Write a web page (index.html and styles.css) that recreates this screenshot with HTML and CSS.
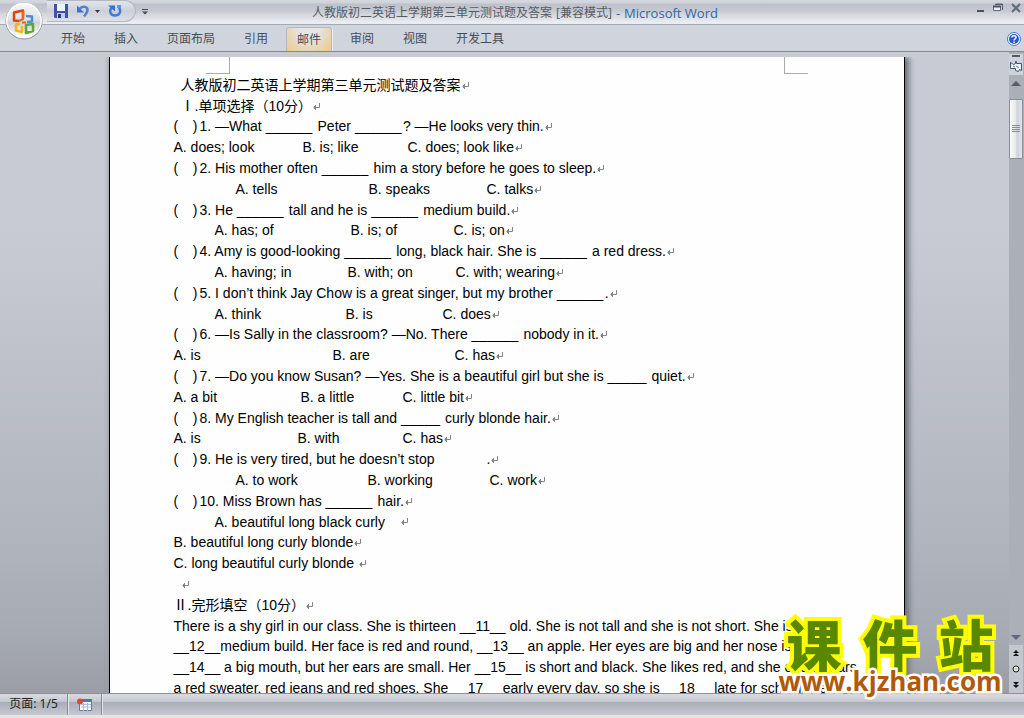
FILE: index.html
```html
<!DOCTYPE html>
<html lang="zh-CN">
<head>
<meta charset="utf-8">
<title>人教版初二英语上学期第三单元测试题及答案 - Microsoft Word</title>
<link rel="stylesheet" href="styles.css">
</head>
<body>
<svg class="defs" aria-hidden="true"><symbol id="ret" viewBox="0 0 8 8"><path d="M7.500 0v4.500H1.500M3.500 2v5M2.500 3v3" fill="none" stroke="#858585"/></symbol></svg>
<div class="app">
  <header class="chrome">
    <button class="office" aria-label="Office">
      <svg viewBox="0 0 40 40"><defs><linearGradient id="orb" x2="0" y2="1"><stop offset="0" stop-color="#f4f5f7"/><stop offset=".45" stop-color="#dfe1e5"/><stop offset=".55" stop-color="#cfd2d7"/><stop offset="1" stop-color="#fff"/></linearGradient></defs><circle cx="20" cy="20" r="18.500" fill="#858a93"/><circle cx="20" cy="19.500" r="18" fill="#fff"/><circle cx="20" cy="20" r="16.500" fill="url(#orb)"/><g fill="none" stroke-width="2.500" stroke-linejoin="round"><path d="M15 20l-5-.5v-8l9-2v6" stroke="#d54710"/><path d="M19 10v8l-4 2" stroke="#e8681c"/><path d="M22 15l6 .5v5l-5 .5" stroke="#4b90cf"/><path d="M16 23l-4 .5v6l6 1.500v-6" stroke="#f3b51c"/><path d="M22 24l7-1v7l-7 2z" stroke="#62a52c"/></g><path d="M18 21.500h4" stroke="#d8641e" stroke-width="2"/></svg>
    </button>
    <div class="titlebar">
      <div class="quick">
        <button aria-label="保存"><svg width="14" height="14" viewBox="0 0 14 14"><path d="M0 0h14v14H1L0 13z" fill="#3f52a6"/><path d="M3 0h8v7H3z" fill="#eef2fb"/><path d="M3 9h8v5H3z" fill="#c3cfe8"/><path d="M4 10h3v4H4z" fill="#26377e"/></svg></button>
        <button aria-label="撤消"><svg width="14" height="14" viewBox="0 0 14 14"><path d="M4 4.500c3-3 8-2 7.500 2-.3 2.500-2 4-3.500 6" fill="none" stroke="#4f83d0" stroke-width="2.500"/><path d="M1 1.500v7h7z" fill="#4272c4"/></svg></button>
        <svg class="drop" width="5" height="3"><path d="M0 0h5L2.500 3z" fill="#333a44"/></svg>
        <button aria-label="恢复"><svg width="14" height="14" viewBox="0 0 14 14"><path d="M4 3c-3.500 4-1.500 8.500 3 8.500s6.500-4 4-8" fill="none" stroke="#3b80d4" stroke-width="2.500"/><path d="M0 1.500h7v6z" fill="#3474c8"/><path d="M9 1h4v3H9z" fill="#5d9ae0"/></svg></button>
      </div>
      <button class="more" aria-label="自定义"><svg width="6" height="6"><path d="M0 .5h6" stroke="#444b55"/><path d="M0 2.500h6L3 5.500z" fill="#444b55"/></svg></button>
      <h1 class="title"><span>人教版初二英语上学期第三单元测试题及答案</span><span>[兼容模式]</span><span class="brand">-</span><span class="brand">Microsoft Word</span></h1>
      <div class="winbtns">
        <button aria-label="最小化"><svg width="8" height="10"><path d="M0 8h7" stroke="#4c5159" stroke-width="2"/></svg></button>
        <button aria-label="还原"><svg width="10" height="10"><path d="M2.500 1h7v6M2 1.500h8" fill="none" stroke="#5a606b"/><path d="M.5 3.500h7v4h-7z" fill="#eee" stroke="#5f6b80"/><path d="M0 3.500h8" stroke="#4d5563" stroke-width="2"/></svg></button>
        <button aria-label="关闭"><svg width="10" height="10"><path d="M1 1l8 8M9 1L1 9" stroke="#626a76" stroke-width="2"/></svg></button>
      </div>
    </div>
    <nav class="ribbon">
      <button>开始</button><button>插入</button><button>页面布局</button><button>引用</button><button class="active">邮件</button><button>审阅</button><button>视图</button><button>开发工具</button>
      <a class="help" href="#" aria-label="帮助"><svg viewBox="0 0 14 14" width="14" height="14"><circle cx="7" cy="7" r="6.500" fill="#fff" stroke="#3d78d1"/><circle cx="7" cy="7" r="5" fill="#215bce"/><path d="M5 5.500c0-2.500 4-2.500 4 0C9 7 7 7 7 8.500M7 9.500v1.500" fill="none" stroke="#fff" stroke-width="1.500"/></svg></a>
    </nav>
  </header>
  <main class="workspace">
    <div class="desk">
      <article class="page">
        <i class="crop left"></i><i class="crop right"></i>
        <div class="line inset">人教版初二英语上学期第三单元测试题及答案<svg class="ret"><use href="#ret"/></svg></div>
        <div class="line inset">Ⅰ.单项选择（10分）<svg class="ret"><use href="#ret"/></svg></div>
        <div class="line"><span class="slot"><i>(</i><i>)</i></span>1. —What <span class="blank">______</span> Peter <span class="blank">______</span>? —He looks very thin.<svg class="ret"><use href="#ret"/></svg></div>
        <div class="line opts q1"><span>A. does; look</span><span>B. is; like</span><span>C. does; look like<svg class="ret"><use href="#ret"/></svg></span></div>
        <div class="line"><span class="slot"><i>(</i><i>)</i></span>2. His mother often <span class="blank">______</span> him a story before he goes to sleep.<svg class="ret"><use href="#ret"/></svg></div>
        <div class="line opts q2"><span>A. tells</span><span>B. speaks</span><span>C. talks<svg class="ret"><use href="#ret"/></svg></span></div>
        <div class="line"><span class="slot"><i>(</i><i>)</i></span>3. He <span class="blank">______</span> tall and he is <span class="blank">______</span> medium build.<svg class="ret"><use href="#ret"/></svg></div>
        <div class="line opts q3"><span>A. has; of</span><span>B. is; of</span><span>C. is; on<svg class="ret"><use href="#ret"/></svg></span></div>
        <div class="line"><span class="slot"><i>(</i><i>)</i></span>4. Amy is good-looking <span class="blank">______</span> long, black hair. She is <span class="blank">______</span> a red dress.<svg class="ret"><use href="#ret"/></svg></div>
        <div class="line opts q4"><span>A. having; in</span><span>B. with; on</span><span>C. with; wearing<svg class="ret"><use href="#ret"/></svg></span></div>
        <div class="line"><span class="slot"><i>(</i><i>)</i></span>5. I don’t think Jay Chow is a great singer, but my brother <span class="blank">______</span>.<svg class="ret"><use href="#ret"/></svg></div>
        <div class="line opts q5"><span>A. think</span><span>B. is</span><span>C. does<svg class="ret"><use href="#ret"/></svg></span></div>
        <div class="line"><span class="slot"><i>(</i><i>)</i></span>6. —Is Sally in the classroom? —No. There <span class="blank">______</span> nobody in it.<svg class="ret"><use href="#ret"/></svg></div>
        <div class="line opts q6"><span>A. is</span><span>B. are</span><span>C. has<svg class="ret"><use href="#ret"/></svg></span></div>
        <div class="line"><span class="slot"><i>(</i><i>)</i></span>7. —Do you know Susan? —Yes. She is a beautiful girl but she is <span class="blank short">_____</span> quiet.<svg class="ret"><use href="#ret"/></svg></div>
        <div class="line opts q7"><span>A. a bit</span><span>B. a little</span><span>C. little bit<svg class="ret"><use href="#ret"/></svg></span></div>
        <div class="line"><span class="slot"><i>(</i><i>)</i></span>8. My English teacher is tall and <span class="blank short">_____</span> curly blonde hair.<svg class="ret"><use href="#ret"/></svg></div>
        <div class="line opts q8"><span>A. is</span><span>B. with</span><span>C. has<svg class="ret"><use href="#ret"/></svg></span></div>
        <div class="line"><span class="slot"><i>(</i><i>)</i></span>9. He is very tired, but he doesn’t stop<span class="gap"></span>.<svg class="ret"><use href="#ret"/></svg></div>
        <div class="line opts q9"><span>A. to work</span><span>B. working</span><span>C. work<svg class="ret"><use href="#ret"/></svg></span></div>
        <div class="line"><span class="slot"><i>(</i><i>)</i></span>10. Miss Brown has <span class="blank">______</span> hair.<svg class="ret"><use href="#ret"/></svg></div>
        <div class="line opts q10"><span>A. beautiful long black curly</span><svg class="ret"><use href="#ret"/></svg></div>
        <div class="line">B. beautiful long curly blonde<svg class="ret"><use href="#ret"/></svg></div>
        <div class="line">C. long beautiful curly blonde <svg class="ret"><use href="#ret"/></svg></div>
        <div class="line inset"><svg class="ret"><use href="#ret"/></svg></div>
        <div class="line">Ⅱ.完形填空（10分）<svg class="ret"><use href="#ret"/></svg></div>
        <div class="line">There is a shy girl in our class. She is thirteen __11__ old. She is not tall and she is not short. She is</div>
        <div class="line">__12__medium build. Her face is red and round, __13__ an apple. Her eyes are big and her nose is short.</div>
        <div class="line">__14__ a big mouth, but her ears are small. Her __15__ is short and black. She likes red, and she often wears</div>
        <div class="line">a red sweater, red jeans and red shoes. She __17__ early every day, so she is __18__ late for school. Her</div>
      </article>
    </div>
    <aside class="scroll">
      <button class="split" aria-label="拆分"></button>
      <button class="ruler" aria-label="标尺"><svg width="12" height="12" viewBox="0 0 12 12"><path d="M.5 1.500l3 2 2-1v-2h1v2h5v7l-2-1-1 2-3-1v-2h-5z" fill="#edf1f8" stroke="#425577"/><path d="M3 5l2 1M6 5l3 2" stroke="#6d7d99"/></svg></button>
      <button class="arrow" aria-label="向上"><svg width="10" height="5"><path d="M5 0l5 5H0z" fill="#555b66"/></svg></button>
      <div class="track"><div class="thumb"><svg width="8" height="8"><path d="M0 .5h8M0 2.500h8M0 4.500h8M0 6.500h8" stroke="#858990"/></svg></div></div>
      <button class="arrow" aria-label="向下"><svg width="10" height="5"><path d="M0 0h10L5 5z" fill="#5f6b7c"/></svg></button>
      <div class="browse">
        <button aria-label="前一页"><svg width="6" height="6"><path d="M3 0l3 3H0zM3 3l3 3H0z" fill="#111"/></svg></button>
        <button aria-label="选择浏览对象"><svg width="8" height="8"><circle cx="4" cy="4" r="3" fill="#ddd" stroke="#222"/></svg></button>
        <button aria-label="下一页"><svg width="6" height="6"><path d="M0 0h6L3 3zM0 3h6L3 6z" fill="#111"/></svg></button>
      </div>
    </aside>
  </main>
  <footer class="status">
    <button class="pages">页面: 1/5</button>
    <button class="macro" aria-label="录制宏"><svg width="16" height="14" viewBox="0 0 16 14"><path d="M2.500 2.500h12v10h-12z" fill="#fff" stroke="#6578a8"/><path d="M2 1h13v3H2z" fill="#4a74cc"/><path d="M4 6.500h10M4 9h10M6.500 5v8M10.500 5v8" stroke="#aab8da"/><circle cx="3" cy="3.500" r="3" fill="#d74a35"/></svg></button>
  </footer>
  <div class="mark"><div class="mark-name"><span>课</span><span>件</span><span>站</span></div><div class="mark-url">www.kjzhan.com</div></div>
</div>
</body>
</html>
```
FILE: styles.css
```css
* { box-sizing: border-box; }
body { margin: 0; font-family: "Liberation Sans", "Noto Sans CJK SC", sans-serif; }
button { margin: 0; padding: 0; border: 0; background: none; font: inherit; color: inherit; display: flex; align-items: center; justify-content: center; }
svg { display: block; }
i { font-style: normal; }
.defs { position: absolute; width: 0; height: 0; }
.app { position: relative; display: flex; flex-direction: column; height: 100vh; overflow: hidden; background: #c8cbd4; }

.chrome { position: relative; flex: none; }
.office { position: absolute; left: 4px; top: 1px; width: 40px; height: 40px; z-index: 2; }
.office svg { width: 40px; height: 40px; }
.titlebar { display: flex; align-items: center; height: 24px; padding-left: 47px; background: linear-gradient(#d5d8df 0, #cfd2d9 3px, #bec1ca 4px, #c6c9d1 11px, #d4d6dc 14px, #dcdfe5 18px, #e9ecf1 22px, #e9ecf1 100%); }
.quick { display: flex; align-items: center; align-self: stretch; gap: 8px; width: 89px; margin-bottom: 2px; padding-left: 7px; border: 1px solid #b4b8c1; border-left: 0; border-radius: 0 12px 12px 0; background: linear-gradient(#e1e4e9, #cdd0d8 50%, #dcdfe5); }
.drop { margin-left: -3px; }
.more { width: 17px; }
.title { display: flex; flex: 1; justify-content: center; align-items: center; gap: 4px; margin: 0; padding: 2px 100px 0 0; font-family: "Open Sans", "Noto Sans CJK SC", sans-serif; font-size: 12px; line-height: 20px; font-weight: 400; color: #555b65; white-space: nowrap; }
.brand { font-size: 13px; color: #2f66a8; }
.winbtns { display: flex; gap: 8px; align-self: flex-start; padding: 3px 3px 0 0; }
.ribbon { display: flex; gap: 7px; height: 28px; padding: 2px 3px 0 50px; border-top: 1px solid #a5abb6; border-bottom: 1px solid #85888e; background: #d0d4dd; font-family: "Noto Sans CJK SC", sans-serif; font-size: 12px; line-height: 20px; color: #454c57; }
.ribbon button { padding: 0 11px 2px; }
.ribbon .active { border: 1px solid #b5b8c0; border-bottom: 0; border-radius: 3px 3px 0 0; padding: 0 10px 2px; background: radial-gradient(ellipse at 50% 0, #e5e5e6 30%, #e8d3ab 75%, #f0c98a); box-shadow: 1px 0 #eceef2; }
.help { margin-left: auto; display: flex; align-items: center; }

.workspace { display: flex; flex: 1; min-height: 0; background: linear-gradient(#c8cbd4 0, #c8cbd4 28%, #b1b5be 75%, #a6aab2 91%, #9a9da4 100%); }
.desk { display: flex; flex: 1; justify-content: center; min-width: 0; margin-top: 5px; padding-left: 4px; overflow: hidden; }
.page { position: relative; flex: none; width: 796px; padding: 18px 0 18px 64px; border: solid #000; border-width: 0 1px; background: #fefefe; box-shadow: 4px 0 6px #6b7079, -1px 0 4px #9a9fa9; font-size: 14px; color: #000; }
.crop { position: absolute; top: 0; width: 24px; height: 17px; border-bottom: 1px solid #a9adb3; }
.crop.left { left: 96px; border-right: 1px solid #a9adb3; }
.crop.right { right: 96px; border-left: 1px solid #a9adb3; }
.line { height: 21px; line-height: 21px; white-space: pre; }
.line:nth-of-type(5n+2) { height: 20px; line-height: 20px; }
.inset { padding-left: 7px; }
.ret { display: inline-block; width: 8px; height: 8px; }
.slot { display: inline-flex; justify-content: space-between; width: 24px; margin-right: 2px; }
.blank { display: inline-block; width: 48px; }
.blank.short { width: 40px; }
.gap { display: inline-block; width: 52px; }
.opts { display: grid; }
.q1 { grid-template-columns: 129px 105px 1fr; }
.q2 { grid-template-columns: 133px 118px 1fr; padding-left: 62px; }
.q3 { grid-template-columns: 136px 103px 1fr; padding-left: 41px; }
.q4 { grid-template-columns: 133px 108px 1fr; padding-left: 41px; }
.q5 { grid-template-columns: 131px 97px 1fr; padding-left: 41px; }
.q6 { grid-template-columns: 159px 122px 1fr; }
.q7 { grid-template-columns: 127px 102px 1fr; }
.q8 { grid-template-columns: 124px 105px 1fr; }
.q9 { grid-template-columns: 132px 122px 1fr; padding-left: 62px; }
.q10 { grid-template-columns: 185px 1fr; padding-left: 41px; align-items: center; }

.scroll { display: flex; flex-direction: column; flex: none; width: 15px; padding: 2px 1px 0 0; background: #abafb7; }
.scroll button { flex: none; width: 100%; }
.scroll .split { height: 5px; border: solid #d0d4dc; border-width: 1px 3px 2px; background: #555b65; }
.scroll .ruler { height: 16px; background: #cdd2dc; }
.scroll .arrow { height: 16px; }
.track { flex: 1; padding-top: 8px; }
.thumb { display: flex; align-items: center; justify-content: center; height: 60px; border: 1px solid #8a8e96; border-radius: 1px; background: linear-gradient(90deg, #fbfbfa, #e9e9e9 45%, #ced2db 60%, #e2e5ea); }
.browse { display: flex; flex-direction: column; justify-content: space-around; height: 48px; background: #c2c6cd; }

.status { display: flex; flex: none; height: 25px; border-top: 1px solid #8d9097; border-bottom: 3px solid #e6e5e0; background: linear-gradient(#d9dbe0, #c5c8d0 35%, #a9adb7 40%, #c6c9d2); font-family: "Noto Sans", "Noto Sans CJK SC", sans-serif; font-size: 12px; line-height: 16px; color: #222; }
.pages { width: 68px; padding-bottom: 2px; }
.macro { width: 34px; }
.pages, .macro { border-right: 1px solid #888b92; box-shadow: 1px 0 #e2e4e8; }

.mark { position: absolute; right: 20px; bottom: 25px; width: 228px; text-align: center; }
.mark-name { display: flex; justify-content: space-around; height: 51px; font-family: "Noto Sans CJK SC", sans-serif; font-size: 55px; line-height: 48px; font-weight: 900; color: #5a8700; -webkit-text-stroke: 8px #ff0; paint-order: stroke fill; }
.mark-url { font-family: "Open Sans", sans-serif; font-size: 26px; line-height: 24px; font-weight: 700; color: #b05a08; -webkit-text-stroke: 5px #fff; paint-order: stroke fill; }
```
